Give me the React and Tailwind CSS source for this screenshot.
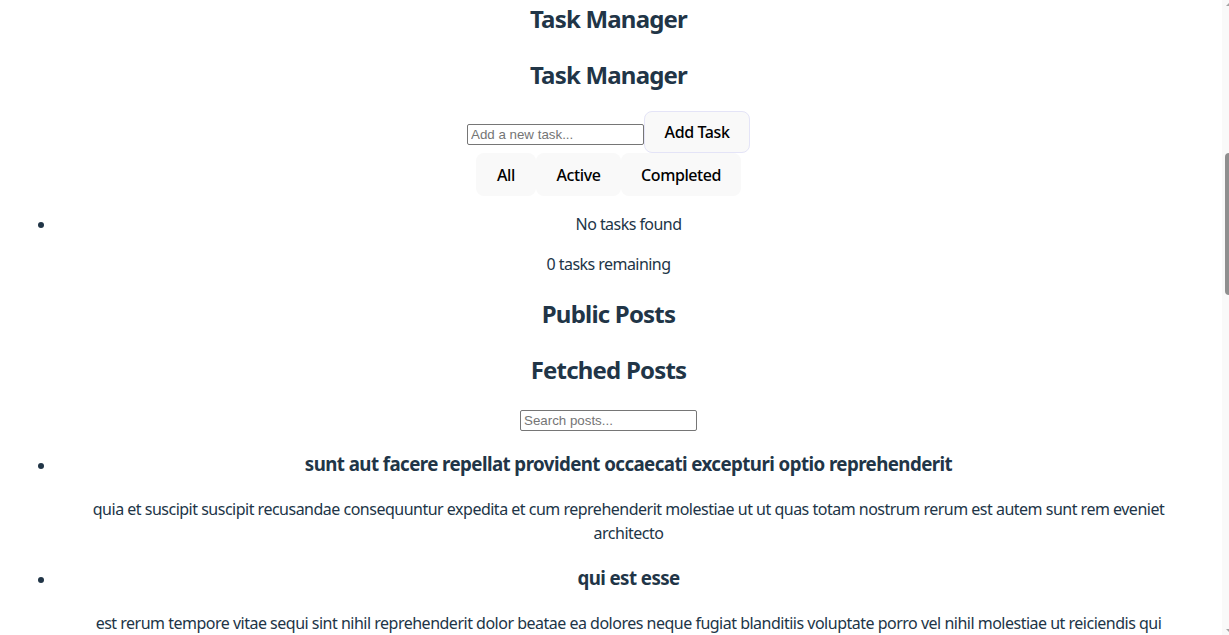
import React from "react";

const posts = [
  {
    title: "sunt aut facere repellat provident occaecati excepturi optio reprehenderit",
    lines: [
      "quia et suscipit suscipit recusandae consequuntur expedita et cum reprehenderit molestiae ut ut quas totam nostrum rerum est autem sunt rem eveniet",
      "architecto",
    ],
  },
  {
    title: "qui est esse",
    lines: [
      "est rerum tempore vitae sequi sint nihil reprehenderit dolor beatae ea dolores neque fugiat blanditiis voluptate porro vel nihil molestiae ut reiciendis qui",
      "aperiam non debitis possimus qui neque nisi nulla",
    ],
  },
  {
    title: "ea molestias quasi exercitationem repellat qui ipsa sit aut",
    lines: [
      "et iusto sed quo iure voluptatem occaecati omnis eligendi aut ad voluptatem doloribus vel accusantium quis pariatur molestiae porro eius odio et labore et velit",
      "aut",
    ],
  },
];

const btn =
  "h-full px-[19px] rounded-lg border bg-[#f9f9f9] text-black text-[16px] font-medium tracking-[-0.4px]";

export default function App() {
  return (
    <div className="flex w-[1229px] h-[635px] overflow-hidden bg-white">
      <div className="w-[1217px] h-[635px] overflow-hidden px-4 text-center text-[#213547] font-['Noto_Sans','Open_Sans',sans-serif]">
        <h2 className="text-[24px] leading-[36px] font-bold tracking-[-0.8px] mt-[1px] mb-5">Task Manager</h2>
        <h2 className="text-[24px] leading-[36px] font-bold tracking-[-0.8px] mb-[18px]">Task Manager</h2>

        <div className="flex justify-center items-start h-[42px]">
          <input
            type="text"
            placeholder="Add a new task..."
            className="mt-[13px] w-[177px] h-[21px] border border-[#767676] rounded-[2px] px-[3px] text-[13.33px] font-['Liberation_Sans',Arial,sans-serif] text-black placeholder:text-[#757575] outline-none"
          />
          <button className={btn + " w-[106px] px-0 border-[#e4e4f7]"}>Add Task</button>
        </div>

        <div className="flex justify-center h-[43px]">
          <button className={btn + " w-[60px] px-0 border-transparent"}>All</button>
          <button className={btn + " w-[85px] px-0 border-transparent"}>Active</button>
          <button className={btn + " w-[120px] px-0 border-transparent"}>Completed</button>
        </div>

        <ul className="mt-4 pl-10 list-disc text-[16px] leading-6 tracking-[-0.55px]">
          <li>No tasks found</li>
        </ul>
        <p className="mt-4 mb-5 text-[16px] leading-6 tracking-[-0.55px]">0 tasks remaining</p>

        <h2 className="text-[24px] leading-[36px] font-bold tracking-[-0.8px] mb-5">Public Posts</h2>
        <h2 className="text-[24px] leading-[36px] font-bold tracking-[-0.8px] mb-0">Fetched Posts</h2>

        <div className="mt-5 h-6 flex justify-center items-center">
          <input
            type="text"
            placeholder="Search posts..."
            className="w-[177px] h-[21px] border border-[#767676] rounded-[2px] px-[3px] text-[13.33px] font-['Liberation_Sans',Arial,sans-serif] text-black placeholder:text-[#757575] outline-none"
          />
        </div>

        <ul className="pl-10 list-disc">
          {posts.map((p, i) => (
            <li key={p.title}>
              <h3
                className={
                  (i === 0 ? "mt-[18px]" : "mt-[19px]") +
                  " text-[18.72px] leading-[28px] font-bold tracking-[-0.57px]"
                }
              >
                {p.title}
              </h3>
              <p className="mt-[19px] text-[16px] leading-6 tracking-[-0.5px]">
                {p.lines[0]}
                <br />
                {p.lines[1]}
              </p>
            </li>
          ))}
        </ul>
      </div>

      <div className="w-[12px] h-[635px] flex">
        <div className="w-[5px] bg-white" />
        <div className="w-[7px] h-[635px] bg-[#f9f9f9] flex flex-col items-end">
          <svg width="4" height="6" viewBox="0 0 4 6" className="mt-[2px]">
            <polygon points="4,1 4,4 1,4" fill="#a3a3a3" />
          </svg>
          <div className="mt-[145px] w-[4px] h-[142px] rounded-l-full bg-[#8f8f8f]" />
          <div className="flex-1" />
          <svg width="4" height="6" viewBox="0 0 4 6" className="mb-[2px]">
            <polygon points="1,2 4,2 4,5" fill="#a3a3a3" />
          </svg>
        </div>
      </div>
    </div>
  );
}
